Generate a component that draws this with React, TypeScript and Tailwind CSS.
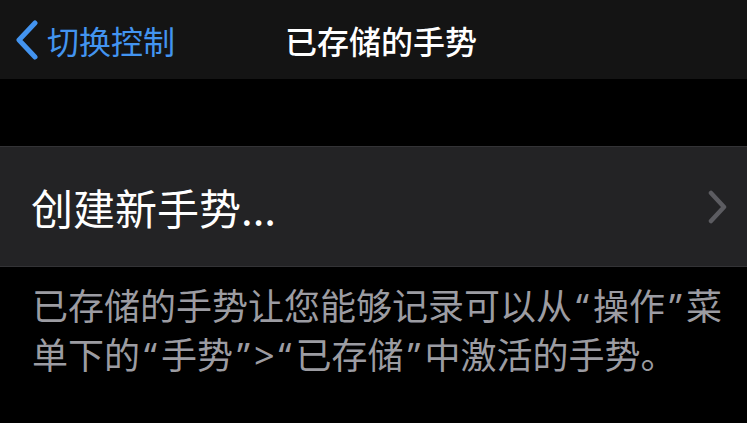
import React from 'react';

function BackChevron() {
  return (
    <svg width="26" height="40" viewBox="0 0 26 40" fill="none" className="shrink-0">
      <path d="M21 3 L5 20 L21 37" stroke="#4394f0" strokeWidth="5" strokeLinecap="round" strokeLinejoin="round" />
    </svg>
  );
}

function RowChevron() {
  return (
    <svg width="22" height="34" viewBox="0 0 22 34" fill="none" className="shrink-0">
      <path d="M4 3 L17 17 L4 31" stroke="#5c5c61" strokeWidth="4.5" strokeLinecap="round" strokeLinejoin="round" />
    </svg>
  );
}

// latin-width curly quotes, narrower than the CJK full-width ones
const Latin = ({ children, spaced = true }: { children: React.ReactNode; spaced?: boolean }) => (
  <span className={`inline-block leading-[46px] font-['Noto_Sans',sans-serif] ${spaced ? 'mx-[4px]' : ''}`}>{children}</span>
);

export default function App() {
  return (
    <div className="w-[747px] h-[423px] overflow-hidden bg-black font-['Noto_Sans_CJK_SC','Noto_Sans',sans-serif]">
      <header className="h-[79px] bg-[#141414] flex items-center pl-[14px]">
        <button className="flex items-center gap-[7px] text-[#4394f0] text-[32px] leading-none">
          <BackChevron />
          <span>切换控制</span>
        </button>
        <h1 className="ml-[110px] text-white text-[32px] font-medium leading-none">已存储的手势</h1>
      </header>

      <div className="h-[67px]" />

      <div className="h-[121px] bg-[#232325] border-t border-b border-[#333336] flex items-center justify-between pl-[31px] pr-[18px]">
        <span className="text-white text-[42px] leading-none">创建新手势...</span>
        <RowChevron />
      </div>

      <p className="pt-[14px] pl-[32px] pr-[10px] text-[36px] leading-[46px] text-[#9c9ca2]">
        已存储的手势让您能够记录可以从<Latin>“</Latin>操作<Latin>”</Latin>菜单下的<Latin>“</Latin>手势<Latin>”</Latin>
        <Latin spaced={false}>&gt;</Latin>
        <Latin>“</Latin>已存储<Latin>”</Latin>中激活的手势。
      </p>
    </div>
  );
}
